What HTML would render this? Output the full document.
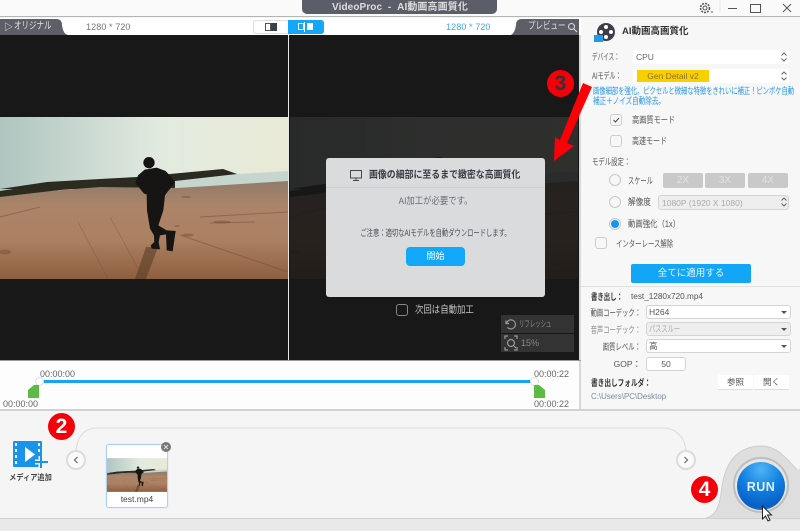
<!DOCTYPE html>
<html><head><meta charset="utf-8">
<style>
html,body{margin:0;padding:0}
body{width:800px;height:531px;overflow:hidden;position:relative;background:#f5f5f6;font-family:"Liberation Sans","Noto Sans CJK JP",sans-serif;color:#555;font-size:9px}
.a{position:absolute;white-space:nowrap}
.t{position:absolute;white-space:nowrap;line-height:12px;height:12px;filter:blur(.3px);transform:scaleX(var(--s,1));transform-origin:0 50%}
.r{transform-origin:100% 50%;text-align:right}
.c{transform-origin:50% 50%;text-align:center}
.sel{position:absolute;background:#fff;border:1px solid #d4d4d4;border-radius:3px;box-sizing:border-box}
.sn{position:absolute;background:#fff;border-radius:2px}
.cb{position:absolute;width:12px;height:12px;box-sizing:border-box;border:1px solid #ccc;border-radius:3px;background:#f7f7f7}
.rd{position:absolute;width:12px;height:12px;box-sizing:border-box;border:1px solid #c8c8c8;border-radius:50%;background:#f7f7f7}
.xb{position:absolute;top:173px;height:15px;background:#c9c9c9;border-radius:2px;color:#e2e2e2;text-align:center;line-height:15px;font-size:10px}
.tri{position:absolute;width:0;height:0;border-left:3px solid transparent;border-right:3px solid transparent;border-top:3px solid #555}
</style></head><body>
<svg width="0" height="0" style="position:absolute"><defs>
<linearGradient id="sky" x1="0" y1="0" x2="1" y2="0"><stop offset="0" stop-color="#afc5c0"/><stop offset=".55" stop-color="#e2eadf"/><stop offset="1" stop-color="#e9ead6"/></linearGradient>
<linearGradient id="sand" x1="0" y1="0" x2="0" y2="1"><stop offset="0" stop-color="#8f7b69"/><stop offset=".25" stop-color="#ac8469"/><stop offset=".6" stop-color="#ab8161"/><stop offset="1" stop-color="#8d5f3f"/></linearGradient>
<symbol id="photo" viewBox="0 0 288 162">
<rect width="288" height="80" fill="url(#sky)"/>
<path d="M0 72L47 65 100 62 137 60 170 57 223 52 237 57 288 62V72H0Z" fill="#2a2a22"/>
<path d="M175 64L237 57 288 54V70L175 72Z" fill="#c6d6cf"/>
<path d="M0 80L50 74 100 70 177 71 288 64V162H0Z" fill="url(#sand)"/>
<path d="M0 74L47 67 100 63 137 62V66L60 73 0 80Z" fill="#2c2b20"/>
<g fill="none" stroke="#6b4630" opacity=".45"><path d="M180 118L288 155" stroke-width="1"/><path d="M78 105L108 162M110 100L140 155" stroke-width=".6"/><path d="M0 100L40 90M200 100L288 95M210 106L255 105" stroke-width="1"/></g>
<g fill="#6b4630" opacity=".4"><ellipse cx="188" cy="118" rx="6" ry="1.500"/><ellipse cx="222" cy="105" rx="9" ry="1.500"/><ellipse cx="177" cy="109" rx="3" ry="1"/><ellipse cx="5" cy="135" rx="6" ry="2.500"/><ellipse cx="186" cy="80" rx="5" ry="1"/></g>
<path d="M135 162L146 130 158 130 146 162Z" fill="#5a3c28" opacity=".6"/>
<g transform="scale(.33333) translate(0,-20)" fill="#171513">
<circle cx="447" cy="157" r="17"/>
<path d="M434 178L414 195 406 218 432 250 440 252 441 300 450 355 462 375 463 395 452 405 455 415 480 417 476 395 480 375 498 372 500 420 518 423 527 362 500 360 475 345 490 300 495 255 500 248 524 218 518 205 497 182 470 172Z"/>
</g>
</symbol>
</defs></svg>

<!-- title bar -->
<div class="a" style="left:0;top:0;width:800px;height:16px;background:#fafafa;border-bottom:1px solid #b5b5b5"></div>
<div class="a" style="left:302px;top:0;width:195px;height:14px;background:#5b5e69;border-radius:0 0 5px 5px"></div>
<div class="t" style="left:332px;top:2px;color:#ddd;font-weight:bold;font-size:10px;letter-spacing:.1px">VideoProc&nbsp; - &nbsp;AI動画高画質化</div>
<svg class="a" style="left:696px;top:0" width="104" height="16" fill="none" stroke="#555"><circle cx="9" cy="8" r="4.500" stroke-dasharray="2 1" stroke-width="1.500"/><circle cx="9" cy="8" r="2"/><path d="M15 12h2"/><path d="M32 8.500h9"/><rect x="54.500" y="4.500" width="10" height="8"/><path d="M87 4l8 8M95 4l-8 8"/><path d="M24 0v12" stroke="#e5e5e5"/></svg>

<!-- toolbar -->
<div class="a" style="left:0;top:18px;width:581px;height:17px;background:#fff"></div>
<svg class="a" style="left:0;top:0" width="581" height="36" fill="#5d5f68"><path d="M0 19H56Q62 19 62 25 63 34 68 35H0Z"/><path d="M579 19H522Q516 19 516 25 515 33 511 35H579Z"/></svg>
<div class="t" style="left:4px;top:21px;color:#e2e2e2;font-size:9px">▷</div>
<div class="t" style="--s:.75;left:14px;top:21px;color:#e2e2e2;font-size:10px">オリジナル</div>
<div class="t" style="left:86px;top:21px;color:#777;font-size:9px;letter-spacing:.1px">1280 * 720</div>
<div class="a" style="left:253px;top:20px;width:36px;height:14px;box-sizing:border-box;border:1px solid #ddd;border-radius:3px 0 0 3px;background:#fff"></div>
<div class="a" style="left:265px;top:23px;width:6px;height:8px;box-sizing:border-box;border:1px solid #555;background:#fff"></div>
<div class="a" style="left:271px;top:23px;width:6px;height:8px;background:#3c3f4c"></div>
<div class="a" style="left:288px;top:20px;width:36px;height:14px;background:#12a7f8;border-radius:0 3px 3px 0"></div>
<div class="a" style="left:298px;top:23px;width:6px;height:7px;box-sizing:border-box;border:1px solid #fff"></div>
<div class="a" style="left:304px;top:22px;width:1px;height:10px;background:#fff"></div>
<div class="a" style="left:307px;top:23px;width:6px;height:7px;background:#fff"></div>
<div class="t" style="left:446px;top:21px;color:#3aa9ee;font-size:9px;letter-spacing:.1px">1280 * 720</div>
<div class="t" style="--s:.75;left:528px;top:21px;color:#ddd;font-size:10px">プレビュー</div>
<svg class="a" style="left:566px;top:21px" width="12" height="12" fill="none" stroke="#ddd"><circle cx="5.500" cy="5.500" r="3"/><path d="M8 8l3 3"/></svg>

<!-- video -->
<div class="a" style="left:0;top:35px;width:579px;height:326px;background:#181818"></div>
<div class="a" style="left:288px;top:35px;width:1px;height:326px;background:#e8e8e8"></div>
<svg class="a" style="left:0;top:117px" width="288" height="162"><use href="#photo" width="288" height="162"/></svg>
<svg class="a" style="left:289px;top:117px" width="290" height="162"><use href="#photo" width="290" height="162"/><rect width="290" height="162" fill="#141414" opacity=".88"/></svg>
<div class="a" style="left:579px;top:35px;width:2px;height:375px;background:#d8d8d8"></div>

<!-- dialog -->
<div class="a" style="left:326px;top:158px;width:219px;height:139px;background:#dadbdd;border-radius:3px"></div>
<div class="a" style="left:326px;top:187px;width:219px;height:1px;background:#cfd0d2"></div>
<svg class="a" style="left:350px;top:169px" width="13" height="13" fill="none" stroke="#44464e"><rect x=".5" y="1.500" width="11" height="7.500"/><path d="M6 9v2M3 11.500h6"/></svg>
<div class="t" style="--s:.89;left:369px;top:170px;color:#3a3c44;font-weight:bold;font-size:10px">画像の細部に至るまで緻密な高画質化</div>
<div class="t c" style="--s:.88;left:326px;width:219px;top:196px;color:#6c6e74;font-size:9.500px">AI加工が必要です。</div>
<div class="t c" style="--s:.7;left:326px;width:219px;top:227px;color:#4c4e54;font-size:9px">ご注意：適切なAIモデルを自動ダウンロードします。</div>
<div class="a" style="left:406px;top:247px;width:59px;height:19px;background:#12a7f8;border-radius:4px;color:#fff;text-align:center;line-height:19px;font-size:9px">開始</div>
<div class="a" style="left:396px;top:304px;width:12px;height:12px;box-sizing:border-box;border:1px solid #888;border-radius:3px"></div>
<div class="t" style="--s:.84;left:415px;top:305px;color:#c4c4c4;font-size:10px">次回は自動加工</div>
<div class="a" style="left:501px;top:315px;width:73px;height:18px;background:#333"></div>
<div class="a" style="left:501px;top:334px;width:73px;height:18px;background:#333"></div>
<svg class="a" style="left:503px;top:317px" width="16" height="34" fill="none" stroke="#999" stroke-width="1.200"><path d="M3 3.500v3h3M3.500 6.500a4.500 4.500 0 1 1 1 3.800"/><circle cx="8" cy="26" r="3.500"/><path d="M11 29l2 2M2 22v-3h3M11 19h3v3M2 30v3h3M14 30v3h-3"/></svg>
<div class="t" style="--s:.6;left:519px;top:318px;color:#888;font-size:9px">リフレッシュ</div>
<div class="t" style="left:521px;top:337px;color:#888;font-size:9px">15%</div>

<!-- right panel -->
<div class="a" style="left:581px;top:18px;width:219px;height:392px;background:#f7f7f8"></div>
<svg class="a" style="left:594px;top:22px" width="24" height="22"><circle cx="12" cy="10" r="9" fill="#3c3f48"/><circle cx="12" cy="5" r="2" fill="#fff"/><circle cx="7" cy="10" r="2" fill="#fff"/><circle cx="17" cy="10" r="2" fill="#fff"/><circle cx="12" cy="15" r="2" fill="#fff"/><rect x="0" y="13" width="9" height="7" fill="#1f9bea"/></svg>
<div class="t" style="left:622px;top:26px;color:#333;font-weight:bold;font-size:9.500px">AI動画高画質化</div>
<div class="t" style="--s:.62;left:592px;top:51px;color:#555;font-size:9px">デバイス：</div>
<div class="sn" style="left:633px;top:50px;width:156px;height:14px"></div>
<div class="t" style="left:636px;top:51px;color:#666;font-size:8.500px">CPU</div>
<div class="t" style="--s:.66;left:592px;top:70px;color:#555;font-size:9px">AIモデル：</div>
<div class="sn" style="left:633px;top:69px;width:156px;height:14px"></div>
<div class="a" style="left:637px;top:70px;width:72px;height:12px;background:#f9cf00"></div>
<div class="t" style="left:637px;width:72px;text-align:center;top:70px;color:#8c7320;font-size:8.500px">Gen Detail v2</div>
<svg class="a" style="left:780px;top:52px" width="8" height="30" fill="none" stroke="#666"><path d="M1.500 3.500l2.500-2.500 2.500 2.500M1.500 6.500l2.500 2.500 2.500-2.500M1.500 22.500l2.500-2.500 2.500 2.500M1.500 25.500l2.500 2.500 2.500-2.500"/></svg>
<div class="t" style="--s:.71;left:593px;top:85px;color:#2a97e6;font-size:9px;letter-spacing:-.15px">画像細部を強化。ピクセルと微細な特徴をきれいに補正！ピンボケ自動</div>
<div class="t" style="--s:.74;left:593px;top:95px;color:#2a97e6;font-size:9px;letter-spacing:-.15px">補正＋ノイズ自動除去。</div>

<div class="cb" style="left:610px;top:114px"></div>
<svg class="a" style="left:610px;top:114px" width="12" height="12" fill="none" stroke="#444"><path d="M3.500 6l2 2 3.500-4"/></svg>
<div class="t" style="--s:.8;left:632px;top:114px;font-size:9px">高画質モード</div>
<div class="cb" style="left:610px;top:135px"></div>
<div class="t" style="--s:.78;left:632px;top:135px;font-size:9px">高速モード</div>
<div class="t" style="--s:.71;left:592px;top:156px;font-size:9px">モデル設定：</div>
<div class="rd" style="left:609px;top:174px"></div>
<div class="t" style="--s:.69;left:628px;top:175px;font-size:9px">スケール</div>
<div class="xb" style="left:663px;width:40px">2X</div>
<div class="xb" style="left:705px;width:40px">3X</div>
<div class="xb" style="left:748px;width:40px">4X</div>
<div class="rd" style="left:609px;top:196px"></div>
<div class="t" style="--s:.85;left:628px;top:196px;font-size:9px">解像度</div>
<div class="sel" style="left:658px;top:195px;width:131px;height:15px;background:#eee"></div>
<div class="t" style="left:662px;top:197px;color:#aaa;font-size:8.500px">1080P (1920 X 1080)</div>
<svg class="a" style="left:780px;top:197px" width="8" height="10" fill="none" stroke="#666"><path d="M1.500 3.500l2.500-2.500 2.500 2.500M1.500 6.500l2.500 2.500 2.500-2.500"/></svg>
<div class="rd" style="left:609px;top:218px"></div>
<div class="a" style="left:611px;top:220px;width:8px;height:8px;border-radius:50%;background:#1296f3"></div>
<div class="t" style="--s:.82;left:628px;top:218px;font-size:9px">動画強化（1x）</div>
<div class="cb" style="left:595px;top:237px"></div>
<div class="t" style="--s:.71;left:616px;top:238px;font-size:9px">インターレース解除</div>
<div class="a" style="left:631px;top:264px;width:120px;height:19px;background:#14a6f6;border-radius:2px;color:#e8f6ff;text-align:center;line-height:19px;font-size:9.500px">全てに適用する</div>
<div class="a" style="left:581px;top:286px;width:219px;height:1px;background:#e0e0e0"></div>

<div class="t" style="--s:.71;left:591px;top:291px;color:#333;font-weight:bold;font-size:9px">書き出し：</div>
<div class="t" style="left:631px;top:291px;color:#555;font-size:8.200px">test_1280x720.mp4</div>
<div class="t r" style="--s:.7;left:541px;width:100px;top:307px;font-size:9px">動画コーデック：</div>
<div class="sel" style="left:646px;top:305px;width:145px;height:14px"></div>
<div class="t" style="left:649px;top:306px;font-size:8.500px">H264</div><div class="tri" style="left:781px;top:311px"></div>
<div class="t r" style="--s:.7;left:541px;width:100px;top:324px;color:#888;font-size:9px">音声コーデック：</div>
<div class="sel" style="left:646px;top:322px;width:145px;height:14px;background:#eee"></div>
<div class="t" style="--s:.69;left:649px;top:323px;color:#aaa;font-size:9px">パススルー</div><div class="tri" style="left:781px;top:328px"></div>
<div class="t r" style="--s:.71;left:541px;width:100px;top:341px;font-size:9px">画質レベル：</div>
<div class="sel" style="left:646px;top:339px;width:145px;height:14px"></div>
<div class="t" style="left:649px;top:340px;font-size:8.500px">高</div><div class="tri" style="left:781px;top:345px"></div>
<div class="t r" style="left:541px;width:100px;top:358px;font-size:8.500px">GOP：</div>
<div class="sel" style="left:646px;top:357px;width:40px;height:14px;text-align:center;line-height:12px;font-size:8.500px">50</div>
<div class="t" style="--s:.74;left:591px;top:377px;color:#333;font-weight:bold;font-size:9px">書き出しフォルダ：</div>
<div class="a" style="left:718px;top:375px;width:35px;height:14px;background:#fff;text-align:center;line-height:14px;font-size:8.500px;border-bottom:1px solid #ddd">参照</div>
<div class="a" style="left:754px;top:375px;width:35px;height:14px;background:#fff;text-align:center;line-height:14px;font-size:8.500px;border-bottom:1px solid #ddd">開く</div>
<div class="t" style="left:591px;top:390px;color:#7b8a9a;font-size:8.500px;transform:scaleX(.93)">C:\Users\PC\Desktop</div>

<!-- timeline -->
<div class="a" style="left:0;top:361px;width:579px;height:49px;background:#fdfdfd"></div>
<div class="a" style="left:0;top:360px;width:581px;height:1px;background:#9a9a9a"></div>
<div class="a" style="left:42px;top:380px;width:492px;height:3px;background:#1ba3f3"></div>
<div class="a" style="left:35px;top:377px;width:9px;height:9px;border-radius:50%;background:#fff;border:1px solid #ddd;box-sizing:border-box"></div>
<div class="a" style="left:530px;top:377px;width:9px;height:9px;border-radius:50%;background:#fff;border:1px solid #ddd;box-sizing:border-box"></div>
<svg class="a" style="left:28px;top:384px" width="518" height="15"><path d="M0 6L6 1h5v13H0Z" fill="#5cbb45"/><path d="M517 6L511 1h-5v13h11Z" fill="#5cbb45"/></svg>
<div class="t" style="left:40px;top:368px;color:#666;font-size:9px">00:00:00</div>
<div class="t" style="left:3px;top:398px;color:#666;font-size:9px">00:00:00</div>
<div class="t" style="left:534px;top:368px;color:#666;font-size:9px">00:00:22</div>
<div class="t" style="left:534px;top:398px;color:#666;font-size:9px">00:00:22</div>
<div class="a" style="left:0;top:409px;width:800px;height:2px;background:#d2d2d2"></div>

<!-- bottom -->
<div class="a" style="left:0;top:518px;width:800px;height:13px;background:#e9e9ea;border-top:1px solid #cfcfcf;box-sizing:border-box"></div>
<svg class="a" style="left:0;top:411px" width="800" height="108">
<path d="M76 40C77 26 84 17 98 17H662C676 17 685 26 686 40" fill="none" stroke="#dcdcdc"/>
<path d="M706 107C716 105 720 95 722 75C726 50 738 35 762 35C775 35 785 45 797 59 798 59 799 58 800 57V107Z" fill="#dedede"/>
<path d="M706 107C716 105 720 95 722 75C726 50 738 35 762 35C775 35 785 45 797 59" fill="none" stroke="#cdcdcd"/>
<rect x="13" y="30" width="29" height="26" rx="1" fill="#1a94ea"/>
<path d="M25 36v15l10-7.500Z" fill="#fff"/>
<path d="M15 32h2v3h-2zM15 38h2v3h-2zM15 44h2v3h-2zM15 50h2v3h-2zM38 32h2v3h-2zM38 38h2v3h-2z" fill="#fff"/>
<path d="M41 45v12M35 51h13" stroke="#f5f5f6" stroke-width="5"/>
<path d="M41 45v12M35 51h13" stroke="#1a94ea" stroke-width="2"/>
</svg>
<div class="t c" style="--s:.9;left:0;width:61px;top:472px;color:#444;font-weight:bold;font-size:8px">メディア追加</div>
<div class="a" style="left:66px;top:450px;width:20px;height:20px;border-radius:50%;background:#fafafa;border:2px solid #dcdcdc;box-sizing:border-box"></div>
<svg class="a" style="left:66px;top:450px" width="20" height="20" fill="none" stroke="#555"><path d="M11.500 7l-3 3 3 3"/></svg>
<div class="a" style="left:676px;top:450px;width:20px;height:20px;border-radius:50%;background:#fafafa;border:2px solid #dcdcdc;box-sizing:border-box"></div>
<svg class="a" style="left:676px;top:450px" width="20" height="20" fill="none" stroke="#555"><path d="M8.500 7l3 3-3 3"/></svg>
<div class="a" style="left:106px;top:444px;width:62px;height:64px;box-sizing:border-box;background:#fff;border:1px solid #a9d2f4;border-radius:3px;box-shadow:0 0 1px #a9d2f4"></div>
<svg class="a" style="left:107px;top:458px" width="60" height="34"><use href="#photo" width="60" height="34"/></svg>
<div class="t" style="left:106px;width:62px;text-align:center;top:493px;color:#444;font-size:8.500px">test.mp4</div>
<div class="a" style="left:161px;top:442px;width:10px;height:10px;border-radius:50%;background:#777"></div>
<svg class="a" style="left:161px;top:442px" width="10" height="10" stroke="#ddd"><path d="M3 3l4 4M7 3l-4 4"/></svg>

<!-- RUN -->
<div class="a" style="left:733px;top:457px;width:56px;height:56px;border-radius:50%;background:#e6e6e6;border:2px solid #bdbdbd;box-sizing:border-box"></div>
<div class="a" style="left:737px;top:462px;width:48px;height:48px;border-radius:50%;background:radial-gradient(circle at 50% 15%,#4fb4f5 0,#0f7fe0 45%,#0a5ec4 80%,#2aa2e8 100%)"></div>
<div class="t c" style="left:737px;width:48px;top:480px;color:#e4effa;font-weight:bold;font-size:12.500px;letter-spacing:.5px;line-height:14px;height:14px">RUN</div>
<svg class="a" style="left:761px;top:505px" width="12" height="18"><path d="M1.500 1v13l3-3 2.500 5 2-1-2.500-5h4Z" fill="#fff" stroke="#222"/></svg>

<!-- arrow + badges -->
<svg class="a" style="left:530px;top:70px" width="70" height="100"><path d="M53 13L62 17 37 73 44 76 24 91 25 67 30 70Z" fill="#fb0007"/></svg>
<div class="a" style="left:547px;top:70px;width:27px;height:27px;border-radius:50%;background:#f4000a;color:#333;text-align:center;font-weight:bold;font-size:21px;line-height:27px">3</div>
<div class="a" style="left:48px;top:413px;width:27px;height:27px;border-radius:50%;background:#f4000a;color:#fff;text-align:center;font-weight:bold;font-size:21px;line-height:27px">2</div>
<div class="a" style="left:691px;top:476px;width:27px;height:27px;border-radius:50%;background:#f4000a;color:#fff;text-align:center;font-weight:bold;font-size:21px;line-height:27px">4</div>
</body></html>
